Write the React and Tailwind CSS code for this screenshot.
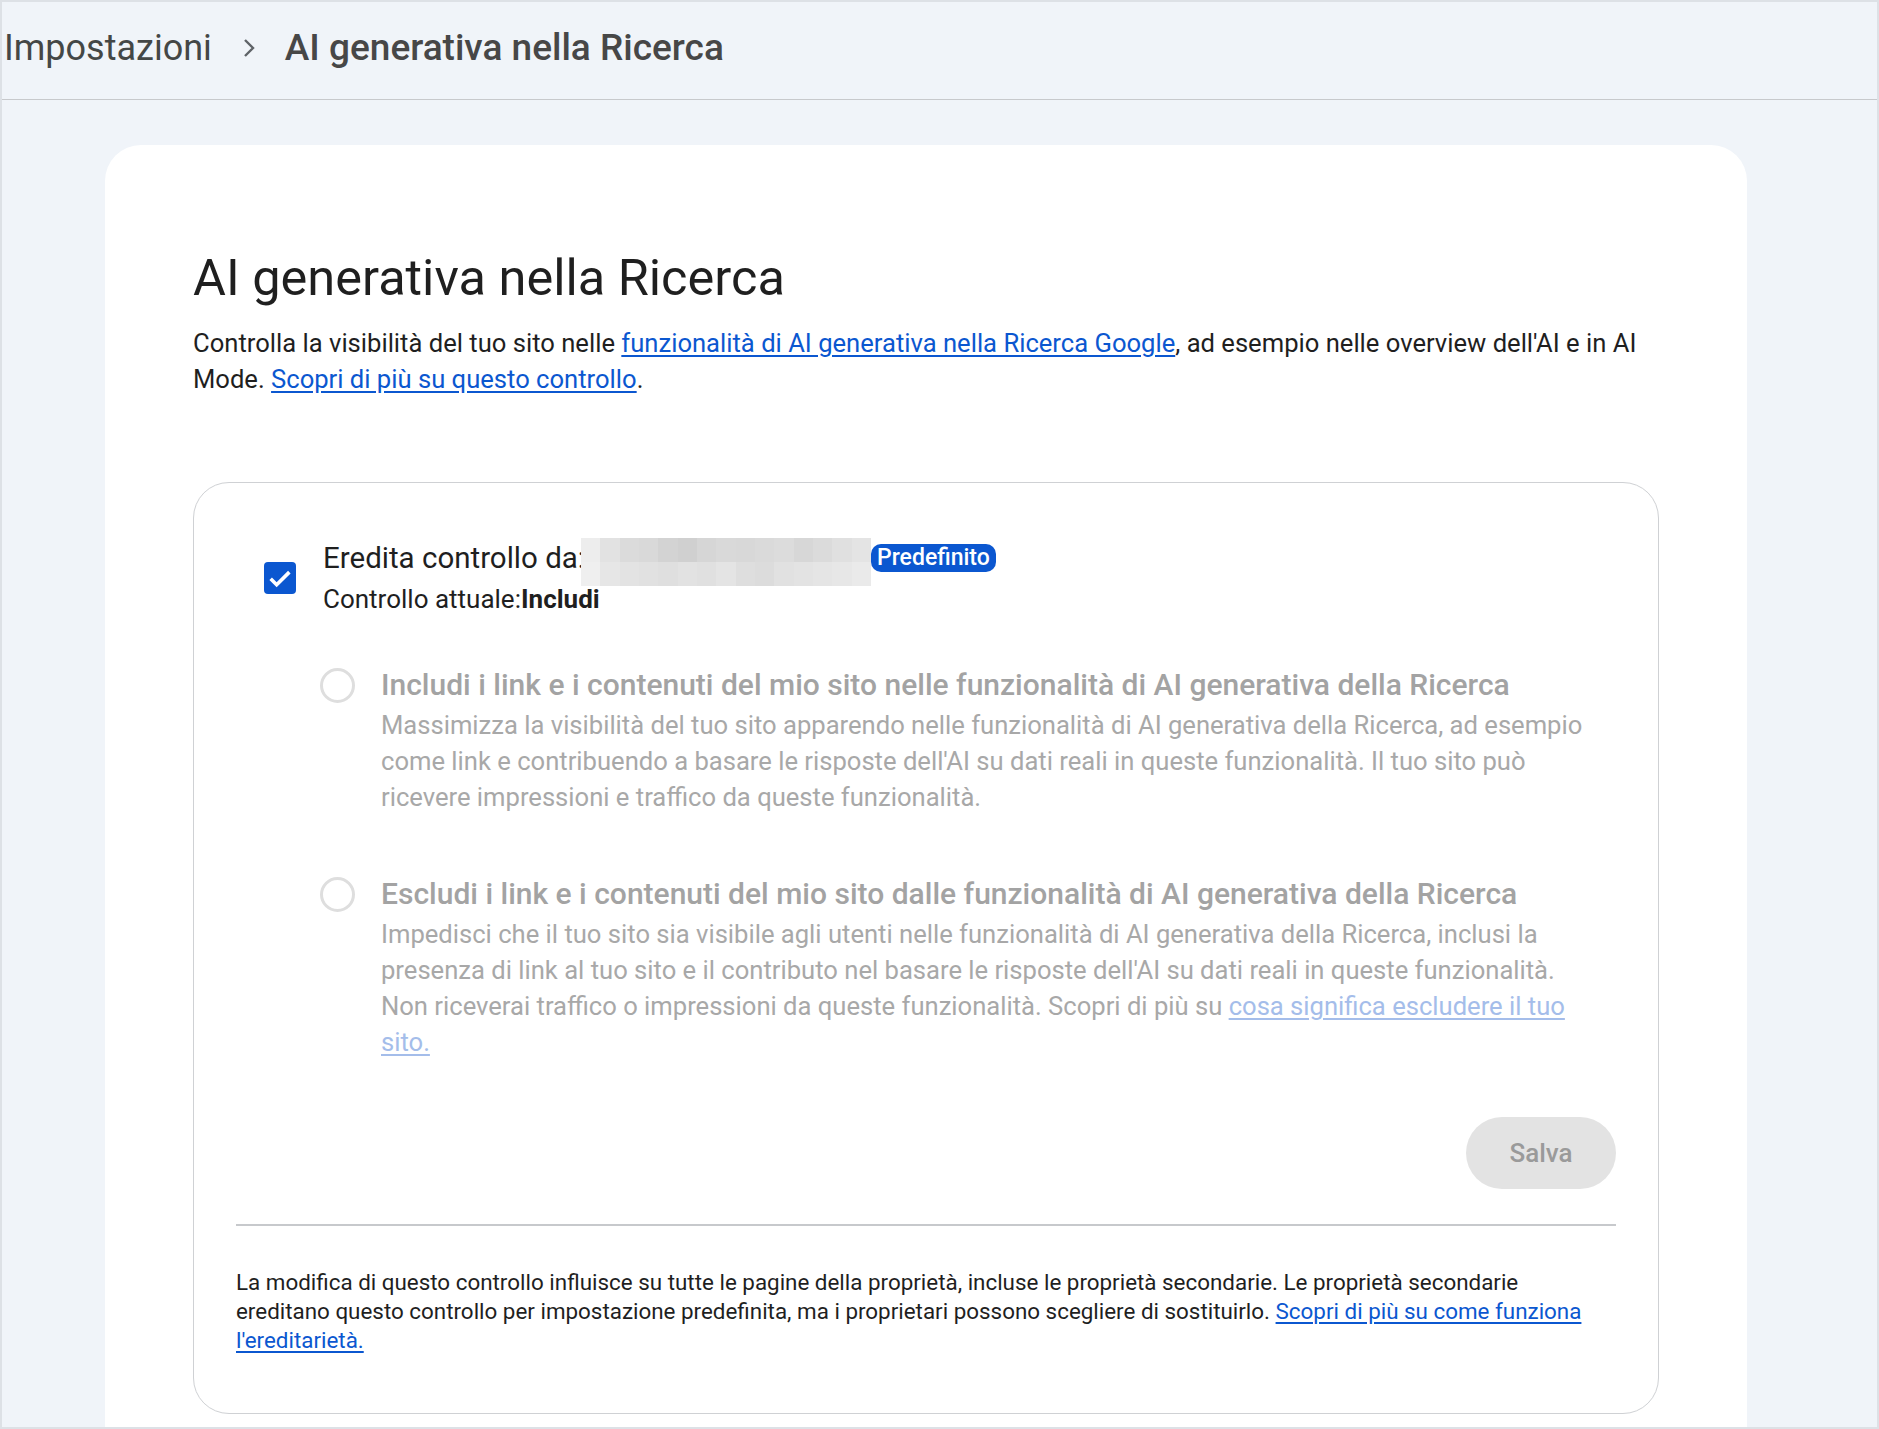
import React from "react";

const blurTop = ["#ededed", "#e2e2e2", "#dbdbdb", "#d9d9d9", "#d3d3d3", "#d0d0d0", "#d6d6d6", "#d9d9d9", "#d8d8d8", "#dadada", "#dcdcdc", "#d7d7d7", "#dbdbdb", "#e0e0e0", "#e4e4e4"];
const blurBot = ["#efefef", "#e6e6e6", "#e3e3e3", "#e1e1e1", "#dfdfdf", "#e2e2e2", "#e0e0e0", "#e4e4e4", "#dedede", "#dcdcdc", "#e1e1e1", "#e3e3e3", "#e5e5e5", "#e7e7e7", "#eaeaea"];

function Blur() {
  return (
    <div className="flex flex-col w-[290px] h-[48px] -my-[6px] translate-y-[4px] shrink-0">
      <div className="flex h-[24px]">
        {blurTop.map((c, i) => (
          <div key={i} className="flex-1 h-full" style={{ backgroundColor: c }} />
        ))}
      </div>
      <div className="flex h-[24px]">
        {blurBot.map((c, i) => (
          <div key={i} className="flex-1 h-full" style={{ backgroundColor: c }} />
        ))}
      </div>
    </div>
  );
}

function Radio({ title, children }) {
  return (
    <div className="flex ml-[84px] pr-[22px]">
      <div className="h-[40px] flex items-center shrink-0">
        <div className="w-[35px] h-[35px] rounded-full border-[3px] border-[#dedede]" />
      </div>
      <div className="ml-[26px] flex-1">
        <div className="text-[30px] leading-[40px] font-medium text-[#a3a3a3] whitespace-nowrap">{title}</div>
        <div className="mt-[2px] text-[25.6px] leading-[36px] text-[#a8a8a8]">{children}</div>
      </div>
    </div>
  );
}

export default function App() {
  return (
    <div
      className="w-[1879px] h-[1429px] overflow-hidden bg-[#f0f4f9] border-2 border-[#dde1e6] text-[#1f1f1f] flex flex-col"
      style={{ fontFamily: "Roboto, 'Liberation Sans', sans-serif" }}
    >
      <header className="h-[98px] shrink-0 border-b-[1.5px] border-[#c7c9cc] flex items-center pl-[2px] pb-[5px]">
        <span className="text-[36px] text-[#444746]">Impostazioni</span>
        <svg className="ml-[30px] mr-[29px]" width="14" height="24" viewBox="0 0 14 24">
          <path d="M3 4 L11 12 L3 20" fill="none" stroke="#5f6368" strokeWidth="2.4" />
        </svg>
        <span className="text-[37px] font-medium text-[#474747]">AI generativa nella Ricerca</span>
      </header>

      <main className="pt-[45px] pl-[103px] flex-1">
        <div className="w-[1642px] min-h-[1400px] bg-white rounded-t-[36px] px-[88px] pt-[105px] pb-[40px]">
          <h1 className="text-[50.5px] leading-[56px] font-normal text-[#1f1f1f]">AI generativa nella Ricerca</h1>
          <p className="mt-[19px] text-[25.6px] leading-[36px]">
            Controlla la visibilità del tuo sito nelle{" "}
            <a className="text-[#0b57d0] underline underline-offset-[3px]">funzionalità di AI generativa nella Ricerca Google</a>, ad
            esempio nelle overview dell'AI e in AI Mode.{" "}
            <a className="text-[#0b57d0] underline underline-offset-[3px]">Scopri di più su questo controllo</a>.
          </p>

          <div className="mt-[85px] border-[1.5px] border-[#cfd1d4] rounded-[36px] px-[42px] pt-[55px] pb-[58px]">
            <div className="flex items-center ml-[28px]">
              <div className="w-[32px] h-[32px] rounded-[4px] bg-[#0b57d0] flex items-center justify-center shrink-0">
                <svg width="32" height="32" viewBox="0 0 24 24">
                  <path d="M5 12.6 L9.5 17.1 L19 7.6" fill="none" stroke="white" strokeWidth="2.7" />
                </svg>
              </div>
              <div className="ml-[27px]">
                <div className="flex items-center h-[40px]">
                  <span className="text-[29.5px] leading-[40px]">Eredita controllo da:</span>
                  <div className="-ml-[4px]">
                    <Blur />
                  </div>
                  <span className="h-[28px] px-[6px] rounded-[10px] bg-[#0b57d0] text-white text-[23px] leading-[28px] font-medium flex items-center">
                    Predefinito
                  </span>
                </div>
                <div className="mt-[3px] text-[26px] leading-[36px]">
                  Controllo attuale:<span className="font-bold">Includi</span>
                </div>
              </div>
            </div>

            <div className="mt-[48px]">
              <Radio title="Includi i link e i contenuti del mio sito nelle funzionalità di AI generativa della Ricerca">
                Massimizza la visibilità del tuo sito apparendo nelle funzionalità di AI generativa della Ricerca, ad esempio
                come link e contribuendo a basare le risposte dell'AI su dati reali in queste funzionalità. Il tuo sito può
                ricevere impressioni e traffico da queste funzionalità.
              </Radio>
            </div>
            <div className="mt-[59px]">
              <Radio title="Escludi i link e i contenuti del mio sito dalle funzionalità di AI generativa della Ricerca">
                Impedisci che il tuo sito sia visibile agli utenti nelle funzionalità di AI generativa della Ricerca, inclusi la
                presenza di link al tuo sito e il contributo nel basare le risposte dell'AI su dati reali in queste funzionalità.
                Non riceverai traffico o impressioni da queste funzionalità. Scopri di più su{" "}
                <a className="text-[#a4bdea] underline underline-offset-[3px]">cosa significa escludere il tuo sito.</a>
              </Radio>
            </div>

            <div className="mt-[57px] flex justify-end">
              <button className="w-[150px] h-[72px] rounded-full bg-[#e3e3e3] text-[#9a9a9a] text-[26px] font-medium">
                Salva
              </button>
            </div>

            <div className="mt-[35px] h-[1.5px] bg-[#c7c9cc]" />

            <p className="mt-[42px] text-[22.4px] leading-[29px] text-[#1f1f1f]">
              La modifica di questo controllo influisce su tutte le pagine della proprietà, incluse le proprietà secondarie. Le
              proprietà secondarie ereditano questo controllo per impostazione predefinita, ma i proprietari possono scegliere
              di sostituirlo.{" "}
              <a className="text-[#0b57d0] underline underline-offset-[3px]">Scopri di più su come funziona l'ereditarietà.</a>
            </p>
          </div>
        </div>
      </main>
    </div>
  );
}
